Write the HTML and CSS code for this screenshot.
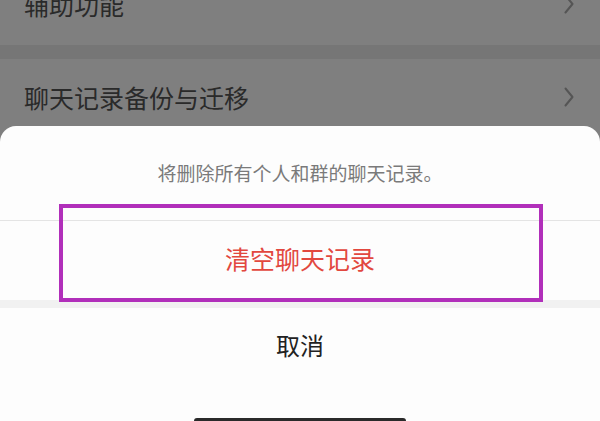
FILE: index.html
```html
<!DOCTYPE html>
<html lang="zh-CN">
<head>
<meta charset="utf-8">
<title>清空聊天记录</title>
<link rel="stylesheet" href="styles.css">
</head>
<body>
<div class="screen">
  <div class="list">
    <div class="row row-top">
      <span class="label">辅助功能</span>
      <svg class="chev" viewBox="0 0 10 20" width="10" height="20"><path d="M1.5 1.5 L8.5 10 L1.5 18.5" fill="none" stroke="#555" stroke-width="2" stroke-linecap="round" stroke-linejoin="round"/></svg>
    </div>
    <div class="gap"></div>
    <div class="row">
      <span class="label">聊天记录备份与迁移</span>
      <svg class="chev" viewBox="0 0 10 20" width="10" height="20"><path d="M1.5 1.5 L8.5 10 L1.5 18.5" fill="none" stroke="#555" stroke-width="2" stroke-linecap="round" stroke-linejoin="round"/></svg>
    </div>
  </div>
  <div class="sheet">
    <div class="msg">将删除所有个人和群的聊天记录。</div>
    <div class="btn danger">清空聊天记录</div>
    <div class="sep"></div>
    <div class="btn cancel">取消</div>
    <div class="home"><div class="bar"></div></div>
  </div>
  <div class="highlight"></div>
</div>
</body>
</html>
```
FILE: styles.css
```css
html, body {
  margin: 0;
  padding: 0;
}
body {
  font-family: "Noto Sans CJK SC", "Noto Sans", sans-serif;
  background: #7f7f7f;
}
.screen {
  position: relative;
  width: 600px;
  height: 421px;
  overflow: hidden;
  background: #7f7f7f;
}
.list {
  display: flex;
  flex-direction: column;
}
.row {
  box-sizing: border-box;
  height: 80px;
  display: flex;
  align-items: center;
  justify-content: space-between;
  padding: 0 26px 4px 24px;
  background: #7f7f7f;
}
.row-top {
  height: 78px;
  margin-top: -33px;
}
.label {
  font-size: 25px;
  color: #2a2a2a;
  line-height: 1;
}
.chev {
  display: block;
}
.gap {
  height: 14px;
  background: #767676;
}
.sheet {
  position: absolute;
  left: 0;
  right: 0;
  top: 126px;
  bottom: 0;
  background: #fdfdfd;
  border-radius: 16px 16px 0 0;
  display: flex;
  flex-direction: column;
}
.msg {
  box-sizing: border-box;
  height: 95px;
  padding-bottom: 2px;
  border-bottom: 1px solid #e4e4e4;
  display: flex;
  align-items: center;
  justify-content: center;
  font-size: 19px;
  color: #7a7a7a;
}
.btn {
  box-sizing: border-box;
  display: flex;
  align-items: center;
  justify-content: center;
  font-size: 24px;
  line-height: 1;
  padding-bottom: 4px;
}
.danger {
  height: 79px;
  color: #e2483f;
  font-size: 25px;
}
.sep {
  height: 8px;
  background: #f1f1f1;
}
.cancel {
  height: 78px;
  color: #222;
}
.home {
  flex: 1;
  display: flex;
  align-items: flex-end;
  justify-content: center;
}
.bar {
  width: 212px;
  height: 3px;
  background: #2a2a2a;
  border-radius: 3px 3px 0 0;
}
.highlight {
  position: absolute;
  left: 59px;
  top: 204px;
  width: 484px;
  height: 98px;
  box-sizing: border-box;
  border: 4px solid #b12fba;
}
```
